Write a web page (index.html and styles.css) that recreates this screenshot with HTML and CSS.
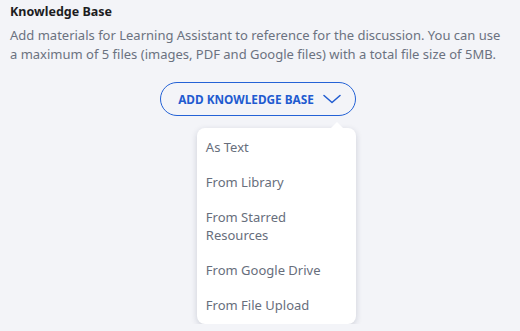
FILE: index.html
```html
<!DOCTYPE html>
<html lang="en">
<head>
    <meta charset="UTF-8">
    <title>Knowledge Base</title>
    <link rel="stylesheet" href="styles.css">
</head>
<body>
    <section class="kb">
        <h3 class="kb-title">Knowledge Base</h3>
        <p class="kb-desc">Add materials for Learning Assistant to reference for the discussion. You can use a maximum of 5 files (images, PDF and Google files) with a total file size of 5MB.</p>

        <div class="kb-actions">
            <div class="dropdown">
                <button class="add-btn">
                    <span>ADD KNOWLEDGE BASE</span>
                    <svg class="chevron" width="18" height="10" viewBox="0 0 18 10">
                        <path d="M1 1.5 L9 8.5 L17 1.5" fill="none" stroke="currentColor" stroke-width="1.5" stroke-linecap="round" stroke-linejoin="round"/>
                    </svg>
                </button>
                <ul class="menu">
                    <li>As Text</li>
                    <li>From Library</li>
                    <li>From Starred Resources</li>
                    <li>From Google Drive</li>
                    <li>From File Upload</li>
                </ul>
            </div>
        </div>
    </section>
</body>
</html>
```

FILE: styles.css
```css
/* === PAGE === */
body {
    margin: 0;
    background-color: #f3f4f8;
    font-family: "Noto Sans", sans-serif;
}

.kb {
    padding: 3px 10px 0;
}

.kb-title {
    margin: 0;
    font-size: 12.5px;
    font-weight: 700;
    line-height: 18px;
    color: #1d1d1f;
}

.kb-desc {
    margin: 5px 0 0;
    font-size: 13px;
    line-height: 19px;
    color: #6b7280;
}

.kb-actions {
    display: flex;
    justify-content: center;
    margin-top: 18px;
    padding-right: 4px;
}

.dropdown {
    display: flex;
    flex-direction: column;
    align-items: flex-end;
}

/* === BUTTON === */
.add-btn {
    display: flex;
    align-items: center;
    gap: 9px;
    height: 34px;
    padding: 0 14px 0 17px;
    border: 1px solid #2462d6;
    border-radius: 17px;
    background: transparent;
    color: #1f5bd0;
    font-family: "Noto Sans", sans-serif;
    font-size: 11.8px;
    font-weight: 700;
    cursor: pointer;
}

.chevron {
    display: block;
}

/* === MENU === */
.menu {
    position: relative;
    width: 159px;
    margin: 12px 0 0;
    padding: 1px 0 2px;
    list-style: none;
    background: #fff;
    border-radius: 8px;
    box-shadow: 0 2px 6px rgba(30, 40, 70, 0.18);
}

.menu::before {
    content: "";
    position: absolute;
    top: -6px;
    right: 13px;
    border-left: 6px solid transparent;
    border-right: 6px solid transparent;
    border-bottom: 6px solid #fff;
}

.menu li {
    padding: 9px 14px 8px 9px;
    font-size: 13px;
    line-height: 18px;
    color: #676e7c;
    cursor: pointer;
}
```
